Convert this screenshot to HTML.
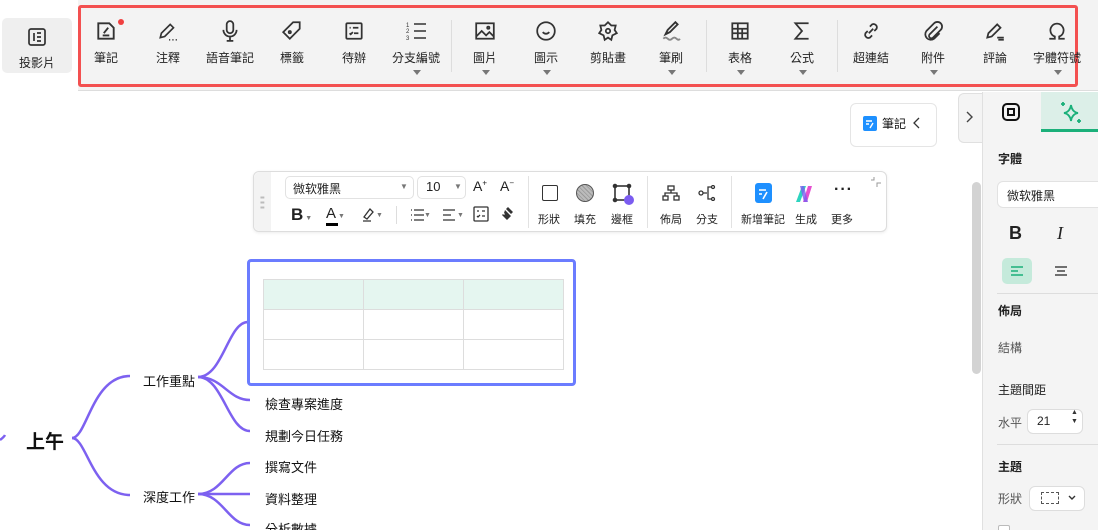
<!DOCTYPE html>
<html><head><meta charset="utf-8"><style>
*{box-sizing:border-box;margin:0;padding:0}
html,body{width:1098px;height:530px;overflow:hidden}
body{background:#fff;font-family:"Liberation Sans","Noto Sans CJK TC",sans-serif;color:#222;position:relative}
.abs{position:absolute}
#top{left:0;top:0;width:1098px;height:91px;background:#f3f3f3;border-bottom:1px solid #ddd}
#left{left:0;top:0;width:78px;height:91px;background:#fff}
#left .in{position:absolute;left:2px;top:18px;width:70px;height:55px;background:#efefef;border-radius:5px}
#red{left:78px;top:5px;width:1000px;height:82px;border:3px solid #f35050;border-radius:3px;background:#f3f3f3}
.it{position:absolute;top:0;width:70px;text-align:center;font-size:12px;color:#222}
.it svg{position:absolute;left:24px;top:20px}
.it .l{position:absolute;top:49px;width:70px;left:0}
.it .ar{position:absolute;top:70px;left:32px;width:0;height:0;border-left:4px solid transparent;border-right:4px solid transparent;border-top:5px solid #777}
.dv{position:absolute;top:20px;width:1px;height:52px;background:#ddd}
.t{position:absolute;font-size:13px;white-space:nowrap;color:#111}
#ft{left:253px;top:171px;width:634px;height:61px;background:#fff;border:1px solid #ddd;border-radius:6px;box-shadow:0 1px 3px rgba(0,0,0,.08)}
.fl{position:absolute;font-size:11px;color:#222;white-space:nowrap}
#rp{left:982px;top:92px;width:116px;height:438px;background:#f4f4f4;border-left:1px solid #e0e0e0}
.rl{position:absolute;font-size:12px;white-space:nowrap}
</style></head><body>
<div id="top" class="abs"></div>
<div id="left" class="abs"><div class="in"></div>
<svg class="abs" style="left:27px;top:27px" width="20" height="20" viewBox="0 0 20 20" fill="none" stroke="#333" stroke-width="1.7"><rect x="2" y="2" width="16" height="16" rx="2"/><path d="M7 6v8M10 6h4M10 10h4M10 14h4"/></svg>
<div class="abs" style="left:0;top:54px;width:74px;text-align:center;font-size:12px">投影片</div></div>
<div id="red" class="abs"></div>
<div class="abs" style="left:0;top:0;width:1098px;height:91px">
<div class="it" style="left:71px"><svg width="22" height="22" viewBox="0 0 20 20" fill="none" stroke="#333" stroke-width="1.7"><path d="M3 3h10l4 4v10H3z"/><path d="M7 14h6M8 12l4-5"/></svg><div class="abs" style="left:47px;top:19px;width:6px;height:6px;border-radius:3px;background:#f04040"></div><div class="l">筆記</div></div>
<div class="it" style="left:133px"><svg width="22" height="22" viewBox="0 0 20 20" fill="none" stroke="#333" stroke-width="1.5"><path d="M3 16l1-4 8-8 3 3-8 8z"/><path d="M11 18h1M14 18h1M17 18h1"/></svg><div class="l">注釋</div></div>
<div class="it" style="left:195px"><svg width="22" height="22" viewBox="0 0 20 20" fill="none" stroke="#333" stroke-width="1.6"><rect x="7" y="1" width="6" height="11" rx="3"/><path d="M4 9a6 6 0 0 0 12 0M10 15v4M7 19h6"/></svg><div class="l">語音筆記</div></div>
<div class="it" style="left:257px"><svg width="22" height="22" viewBox="0 0 20 20" fill="none" stroke="#333" stroke-width="1.6"><path d="M11 2h6v6l-9 9-6-6z"/><circle cx="8" cy="11" r="1"/></svg><div class="l">標籤</div></div>
<div class="it" style="left:319px"><svg width="22" height="22" viewBox="0 0 20 20" fill="none" stroke="#333" stroke-width="1.6"><rect x="3" y="3" width="14" height="14" rx="1"/><path d="M6 7h1M9 7h5M6 12l1 1 2-2M10 12h4"/></svg><div class="l">待辦</div></div>
<div class="it" style="left:381px"><svg width="22" height="22" viewBox="0 0 22 22" fill="none" stroke="#333" stroke-width="1.6"><path d="M9 4h12M9 11h12M9 18h12"/><text x="1" y="7" font-size="6" fill="#333" stroke="none">1</text><text x="1" y="13" font-size="6" fill="#333" stroke="none">2</text><text x="1" y="20" font-size="6" fill="#333" stroke="none">3</text></svg><div class="l">分支編號</div><div class="ar"></div></div>
<div class="dv" style="left:451px"></div>
<div class="it" style="left:450px"><svg width="22" height="22" viewBox="0 0 20 20" fill="none" stroke="#333" stroke-width="1.6"><rect x="2" y="3" width="16" height="14"/><path d="M2 15l5-5 4 4 3-3 4 4"/><circle cx="13" cy="7" r="1"/></svg><div class="l">圖片</div><div class="ar"></div></div>
<div class="it" style="left:511px"><svg width="22" height="22" viewBox="0 0 20 20" fill="none" stroke="#333" stroke-width="1.6"><circle cx="10" cy="10" r="8"/><path d="M7 11q3 3 6 0M7 8h0M13 8h0"/></svg><div class="l">圖示</div><div class="ar"></div></div>
<div class="it" style="left:573px"><svg width="22" height="22" viewBox="0 0 20 20" fill="none" stroke="#333" stroke-width="1.6"><path d="M10 2l3 3h4l-1 4 2 3-4 2-1 4-3-2-3 2-1-4-4-2 2-3-1-4h4z"/><circle cx="10" cy="10" r="2"/></svg><div class="l">剪貼畫</div></div>
<div class="it" style="left:636px"><svg width="22" height="22" viewBox="0 0 20 20" fill="none" stroke="#333" stroke-width="1.7"><path d="M5 13l2-4 7-7 2 2-7 7z"/><path d="M3 17q2-2 4 0t4 0 4 0 3 0" stroke="#888"/></svg><div class="l">筆刷</div><div class="ar"></div></div>
<div class="dv" style="left:706px"></div>
<div class="it" style="left:705px"><svg width="22" height="22" viewBox="0 0 20 20" fill="none" stroke="#333" stroke-width="1.6"><rect x="3" y="3" width="14" height="14"/><path d="M3 8h14M3 12h14M8 3v14M12 8v9"/></svg><div class="l">表格</div><div class="ar"></div></div>
<div class="it" style="left:767px"><svg width="22" height="22" viewBox="0 0 20 20" fill="none" stroke="#333" stroke-width="1.6"><path d="M16 3H4l6 7-6 7h12"/></svg><div class="l">公式</div><div class="ar"></div></div>
<div class="dv" style="left:837px"></div>
<div class="it" style="left:836px"><svg width="22" height="22" viewBox="0 0 20 20" fill="none" stroke="#333" stroke-width="1.6"><path d="M9 6l2-2a3 3 0 0 1 4 4l-2 2M11 14l-2 2a3 3 0 0 1-4-4l2-2M8 12l4-4"/></svg><div class="l">超連結</div></div>
<div class="it" style="left:898px"><svg width="22" height="22" viewBox="0 0 20 20" fill="none" stroke="#333" stroke-width="1.6"><path d="M14 6l-7 7a2 2 0 0 0 3 3l7-7a4 4 0 0 0-6-6l-7 7a5 5 0 0 0 7 7l5-5"/></svg><div class="l">附件</div><div class="ar"></div></div>
<div class="it" style="left:960px"><svg width="22" height="22" viewBox="0 0 20 20" fill="none" stroke="#333" stroke-width="1.6"><path d="M3 16l1-4 8-8 3 3-8 8zM12 16h6M13 18h5"/></svg><div class="l">評論</div></div>
<div class="it" style="left:1022px"><svg width="22" height="22" viewBox="0 0 20 20" fill="none" stroke="#333" stroke-width="1.6"><path d="M3 17h5v-2a6 6 0 1 1 4 0v2h5"/></svg><div class="l">字體符號</div><div class="ar"></div></div>
</div>

<div class="abs" style="left:850px;top:103px;width:87px;height:44px;border:1px solid #e5e5e5;border-radius:6px;background:#fff"></div>
<svg class="abs" style="left:863px;top:116px" width="14" height="15" viewBox="0 0 14 15"><rect width="14" height="15" rx="2" fill="#1e90ff"/><path d="M3 5h6M3 8h3M7 12l3-5" stroke="#fff" stroke-width="1.4"/></svg>
<div class="t" style="left:882px;top:115px;font-size:12px">筆記</div>
<svg class="abs" style="left:912px;top:116px" width="10" height="14" viewBox="0 0 10 14" fill="none" stroke="#333" stroke-width="1.3"><path d="M7 2L2 7l5 5"/></svg>

<div class="abs" style="left:958px;top:93px;width:25px;height:50px;background:#f4f4f4;border:1px solid #e0e0e0;border-right:none;border-radius:6px 0 0 6px"></div>
<svg class="abs" style="left:964px;top:110px" width="10" height="14" viewBox="0 0 10 14" fill="none" stroke="#444" stroke-width="1.4"><path d="M3 2l5 5-5 5"/></svg>
<div class="abs" style="left:972px;top:182px;width:9px;height:192px;background:#d3d3d3;border-radius:5px"></div>
<div id="rp" class="abs">
<div class="abs" style="left:58px;top:0;width:58px;height:40px;background:#dcefe8;border-bottom:3px solid #1bb07a"></div>
<svg class="abs" style="left:18px;top:10px" width="20" height="20" viewBox="0 0 20 20" fill="none" stroke="#111" stroke-width="2"><rect x="2" y="2" width="16" height="16" rx="4"/><rect x="7" y="7" width="6" height="6"/></svg>
<svg class="abs" style="left:75px;top:8px" width="26" height="26" viewBox="0 0 26 26" fill="none" stroke="#1bb07a" stroke-width="1.8"><path d="M13 5q1 7 7 8-6 1-7 8-1-7-7-8 6-1 7-8z"/><path d="M5 2v4M3 4h4M21 19v4M19 21h4"/></svg>
<div class="rl" style="left:15px;top:58px;font-weight:bold">字體</div>
<div class="abs" style="left:14px;top:89px;width:110px;height:27px;background:#fff;border:1px solid #e2e2e2;border-radius:6px"></div>
<div class="rl" style="left:24px;top:95px">微软雅黑</div>
<div class="rl" style="left:26px;top:131px;font-size:18px;font-weight:bold">B</div>
<div class="rl" style="left:74px;top:131px;font-size:18px;font-family:'Liberation Serif',serif;font-style:italic">I</div>
<div class="abs" style="left:19px;top:166px;width:30px;height:26px;background:#c5eadb;border-radius:5px"></div>
<svg class="abs" style="left:27px;top:172px" width="14" height="14" viewBox="0 0 14 14" stroke="#1bb07a" stroke-width="1.4"><path d="M1 3h12M1 7h7M1 11h12"/></svg>
<svg class="abs" style="left:71px;top:172px" width="14" height="14" viewBox="0 0 14 14" stroke="#222" stroke-width="1.3"><path d="M1 3h12M3 7h8M1 11h12"/></svg>
<div class="abs" style="left:14px;top:201px;width:102px;height:1px;background:#ddd"></div>
<div class="rl" style="left:15px;top:210px;font-weight:bold">佈局</div>
<div class="rl" style="left:15px;top:247px;color:#555">結構</div>
<div class="rl" style="left:15px;top:289px">主題間距</div>
<div class="rl" style="left:15px;top:322px;color:#555">水平</div>
<div class="abs" style="left:44px;top:317px;width:56px;height:25px;background:#fff;border:1px solid #ddd;border-radius:6px"></div>
<div class="rl" style="left:54px;top:322px">21</div>
<div class="rl" style="left:88px;top:316px;font-size:7px;line-height:9px;color:#333">▲<br>▼</div>
<div class="abs" style="left:14px;top:352px;width:102px;height:1px;background:#ddd"></div>
<div class="rl" style="left:15px;top:366px;font-weight:bold">主題</div>
<div class="rl" style="left:15px;top:398px;color:#555">形狀</div>
<div class="abs" style="left:46px;top:394px;width:56px;height:25px;background:#fff;border:1px solid #ddd;border-radius:6px"></div>
<div class="abs" style="left:58px;top:400px;width:18px;height:12px;border:1px dashed #555"></div>
<svg class="abs" style="left:84px;top:402px" width="10" height="8" viewBox="0 0 10 8" fill="none" stroke="#333" stroke-width="1.4"><path d="M2 2l3 3 3-3"/></svg>
<div class="abs" style="left:15px;top:433px;width:12px;height:12px;border:1px solid #bbb;border-radius:2px;background:#fff"></div>
</div>

<div id="ft" class="abs">
<div class="abs" style="left:0;top:0;width:17px;height:59px;background:#f3f3f3;border-radius:6px 0 0 6px"></div>
<div class="abs" style="left:6px;top:23px;font-size:8px;color:#bbb;line-height:5px;letter-spacing:-1px">▪▪<br>▪▪<br>▪▪</div>
<div class="abs" style="left:31px;top:4px;width:129px;height:23px;border:1px solid #e2e2e2;border-radius:5px"></div>
<div class="fl" style="left:39px;top:8px;font-size:12px">微软雅黑</div>
<div class="fl" style="left:146px;top:10px;font-size:8px;color:#777">▼</div>
<div class="abs" style="left:163px;top:4px;width:49px;height:23px;border:1px solid #e2e2e2;border-radius:5px"></div>
<div class="fl" style="left:172px;top:7px;font-size:13px">10</div>
<div class="fl" style="left:200px;top:10px;font-size:8px;color:#777">▼</div>
<div class="fl" style="left:219px;top:6px;font-size:14px">A<sup style="font-size:8px">+</sup></div>
<div class="fl" style="left:246px;top:6px;font-size:14px">A<sup style="font-size:8px">−</sup></div>
<div class="fl" style="left:37px;top:33px;font-size:17px;font-weight:bold">B<span style="font-size:7px;color:#777;font-weight:normal"> ▼</span></div>
<div class="fl" style="left:72px;top:33px;font-size:15px">A<span style="font-size:7px;color:#777"> ▼</span></div>
<div class="abs" style="left:72px;top:51px;width:12px;height:3px;background:#000"></div>
<svg class="abs" style="left:107px;top:35px" width="14" height="16" viewBox="0 0 14 16" fill="none" stroke="#333" stroke-width="1.3"><path d="M3 10l6-8 3 3-6 7zM2 14h8" /></svg>
<div class="fl" style="left:122px;top:40px;font-size:7px;color:#777">▼</div>
<div class="abs" style="left:142px;top:34px;width:1px;height:18px;background:#ddd"></div>
<svg class="abs" style="left:156px;top:36px" width="14" height="14" viewBox="0 0 14 14" stroke="#333" stroke-width="1.3"><path d="M4 2h10M4 7h10M4 12h10M1 2h1M1 7h1M1 12h1"/></svg>
<div class="fl" style="left:170px;top:40px;font-size:7px;color:#777">▼</div>
<svg class="abs" style="left:188px;top:36px" width="14" height="14" viewBox="0 0 14 14" stroke="#333" stroke-width="1.3"><path d="M1 2h12M1 7h8M1 12h12"/></svg>
<div class="fl" style="left:203px;top:40px;font-size:7px;color:#777">▼</div>
<svg class="abs" style="left:219px;top:34px" width="16" height="16" viewBox="0 0 16 16" fill="none" stroke="#333" stroke-width="1.3"><rect x="1" y="1" width="14" height="14" rx="1"/><path d="M4 5h2M9 5h3M4 10l1 1 2-2M9 10h3"/></svg>
<svg class="abs" style="left:245px;top:34px" width="16" height="16" viewBox="0 0 16 16" fill="#333"><path d="M9 1l5 5-2 2-5-5zM6 4l6 6-4 4-5-5 1-1 1 1 1-1-1-1z"/></svg>
<div class="abs" style="left:274px;top:4px;width:1px;height:52px;background:#e2e2e2"></div>
<div class="abs" style="left:288px;top:13px;width:16px;height:16px;border:1.5px solid #333;border-radius:2px"></div>
<div class="fl" style="left:284px;top:39px">形狀</div>
<div class="abs" style="left:322px;top:12px;width:18px;height:18px;border-radius:9px;border:1.5px solid #555;background:repeating-linear-gradient(45deg,#bbb 0 2px,#999 2px 3px)"></div>
<div class="fl" style="left:320px;top:39px">填充</div>
<svg class="abs" style="left:358px;top:11px" width="22" height="22" viewBox="0 0 22 22" fill="none" stroke="#333" stroke-width="1.6"><rect x="3" y="3" width="14" height="14"/><circle cx="3" cy="3" r="1.5" fill="#333"/><circle cx="17" cy="3" r="1.5" fill="#333"/><circle cx="3" cy="17" r="1.5" fill="#333"/><circle cx="17" cy="17" r="5" fill="#7b5cf0" stroke="none"/></svg>
<div class="fl" style="left:357px;top:39px">邊框</div>
<div class="abs" style="left:393px;top:4px;width:1px;height:52px;background:#e2e2e2"></div>
<svg class="abs" style="left:408px;top:13px" width="18" height="16" viewBox="0 0 18 16" fill="none" stroke="#333" stroke-width="1.3"><rect x="6" y="1" width="6" height="4"/><rect x="1" y="11" width="5" height="4"/><rect x="12" y="11" width="5" height="4"/><path d="M9 5v3M3 11V8h12v3"/></svg>
<div class="fl" style="left:406px;top:39px">佈局</div>
<svg class="abs" style="left:444px;top:13px" width="18" height="16" viewBox="0 0 18 16" fill="none" stroke="#333" stroke-width="1.3"><circle cx="3" cy="8" r="2"/><circle cx="15" cy="2" r="1.5"/><circle cx="15" cy="14" r="1.5"/><path d="M5 8h4M13 2h-3v12h3"/></svg>
<div class="fl" style="left:442px;top:39px">分支</div>
<div class="abs" style="left:477px;top:4px;width:1px;height:52px;background:#e2e2e2"></div>
<svg class="abs" style="left:501px;top:11px" width="17" height="20" viewBox="0 0 17 20"><rect width="17" height="20" rx="3" fill="#1e90ff"/><path d="M4 7h7M4 11h3M8 16l4-7" stroke="#fff" stroke-width="1.6"/></svg>
<div class="fl" style="left:487px;top:39px">新增筆記</div>
<svg class="abs" style="left:540px;top:12px" width="22" height="20" viewBox="0 0 22 20"><path d="M2 18L8 2h4L6 18z" fill="#2dd4bf"/><path d="M9 18l5-16h4l-5 16z" fill="#e64fd0"/><path d="M6 2h4l4 16h-4z" fill="#7c5cf0" opacity=".8"/></svg>
<div class="fl" style="left:541px;top:39px">生成</div>
<div class="fl" style="left:580px;top:9px;font-size:16px;font-weight:bold;letter-spacing:1px">···</div>
<div class="fl" style="left:577px;top:39px">更多</div>
<svg class="abs" style="left:617px;top:5px" width="10" height="10" viewBox="0 0 10 10" fill="none" stroke="#999" stroke-width="1"><path d="M0 3h3V0M10 6H6v4"/></svg>
</div>

<svg class="abs" style="left:0;top:250px" width="600" height="280" viewBox="0 250 600 280" fill="none" stroke="#7d61f0" stroke-width="2.5">
<path d="M0 440q4-3 5-5"/>
<path d="M72 438c15 0 20-62 58-62"/>
<path d="M72 438c15 0 20 57 58 57"/>
<path d="M198 377c25 0 30-55 50-55"/>
<path d="M198 377c25 0 30 23 52 23"/>
<path d="M198 377c25 0 30 54 52 54"/>
<path d="M198 494c25 0 30-31 52-31"/>
<path d="M198 494h52"/>
<path d="M198 494c25 0 30 31 52 31"/>
</svg>
<div class="abs" style="left:247px;top:259px;width:329px;height:127px;border:3px solid #6b7cff;border-radius:4px;background:#fff"></div>
<table class="abs" style="left:263px;top:279px;width:301px;height:91px;border-collapse:collapse">
<tr style="background:#e5f6f0"><td style="border:1px solid #ddd"></td><td style="border:1px solid #ddd"></td><td style="border:1px solid #ddd"></td></tr>
<tr><td style="border:1px solid #ddd"></td><td style="border:1px solid #ddd"></td><td style="border:1px solid #ddd"></td></tr>
<tr><td style="border:1px solid #ddd"></td><td style="border:1px solid #ddd"></td><td style="border:1px solid #ddd"></td></tr>
</table>
<div class="t" style="left:26px;top:427px;font-size:19px;font-weight:bold">上午</div>
<div class="t" style="left:143px;top:371px">工作重點</div>
<div class="t" style="left:143px;top:487px">深度工作</div>
<div class="t" style="left:265px;top:394px">檢查專案進度</div>
<div class="t" style="left:265px;top:426px">規劃今日任務</div>
<div class="t" style="left:265px;top:457px">撰寫文件</div>
<div class="t" style="left:265px;top:489px">資料整理</div>
<div class="t" style="left:265px;top:519px">分析數據</div>
</body></html>
